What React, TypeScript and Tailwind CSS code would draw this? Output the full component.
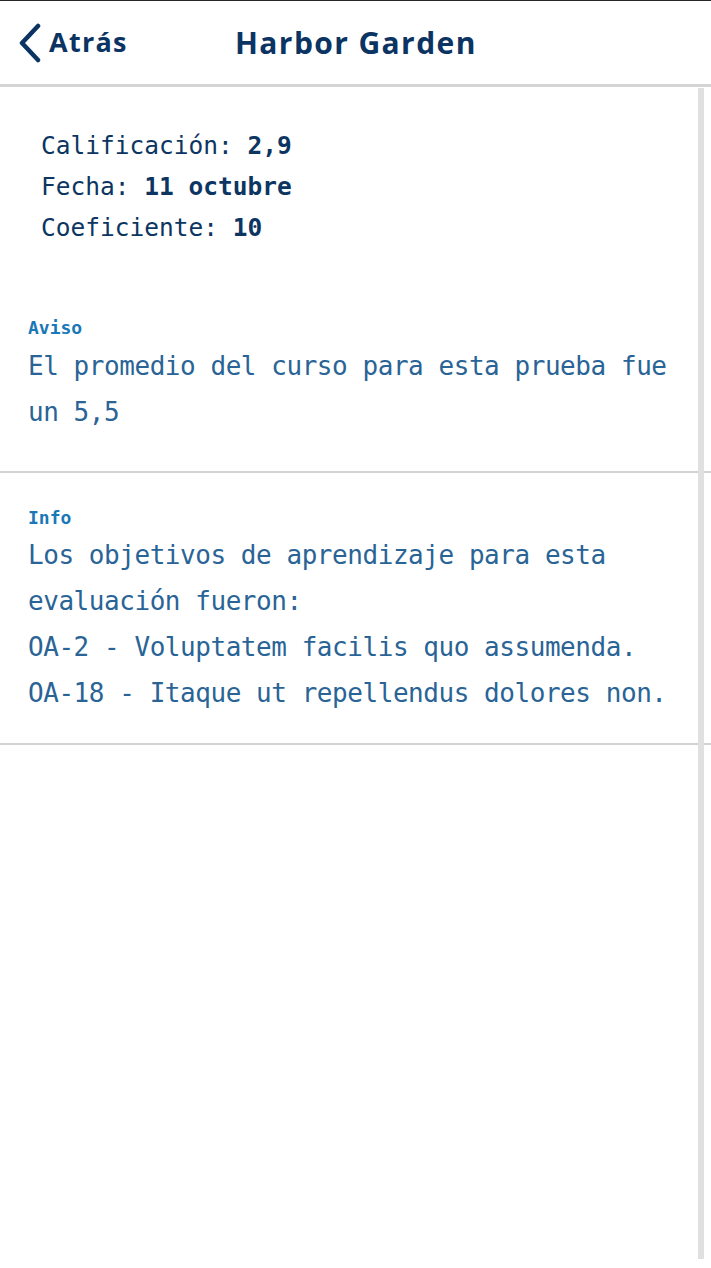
import React from "react";

const mono = { fontFamily: '"DejaVu Sans Mono", "Liberation Mono", monospace' };

export default function App() {
  return (
    <div className="relative w-[711px] h-[1268px] bg-white overflow-hidden border-t border-[#262626]">
      {/* Header */}
      <div className="relative h-[86px] flex items-center border-b-[3px] border-[#d5d5d5]">
        <div className="flex items-center pl-[17px] text-[#0b3463]">
          <svg width="26" height="40" viewBox="0 0 26 40" className="mr-[6px]">
            <path d="M21 3 L5 20 L21 37" fill="none" stroke="#0b3463" strokeWidth="4.5" strokeLinecap="round" strokeLinejoin="round" />
          </svg>
          <span className="text-[27px] font-bold tracking-[1.3px]" style={{ fontFamily: '"Open Sans", sans-serif' }}>Atrás</span>
        </div>
        <div className="absolute left-[235px] top-0 h-full flex items-center">
          <span className="text-[30px] font-bold text-[#0b3463] tracking-[1.4px]" style={{ fontFamily: '"Open Sans", sans-serif' }}>Harbor Garden</span>
        </div>
      </div>

      {/* Content */}
      <div className="pr-[13px]">
        <div className="pl-[41px] pt-[38px] text-[24.5px] leading-[41px] text-[#0d3561]" style={mono}>
          <div>Calificación: <span className="font-bold">2,9</span></div>
          <div>Fecha: <span className="font-bold">11 octubre</span></div>
          <div>Coeficiente: <span className="font-bold">10</span></div>
        </div>

        <div className="pl-[28px] pt-[67px] pb-[36px]" style={mono}>
          <div className="text-[18px] leading-[26px] font-bold text-[#1a78b8]">Aviso</div>
          <div className="mt-[2px] text-[26px] leading-[46px] text-[#2a6496] tracking-[-0.45px]">El promedio del curso para esta prueba fue un 5,5</div>
        </div>
      </div>
      <div className="h-[2px] bg-[#d3d3d3]" />
      <div className="pr-[13px]">
        <div className="pl-[28px] pt-[32px] pb-[27px]" style={mono}>
          <div className="text-[18px] leading-[26px] font-bold text-[#1a78b8]">Info</div>
          <div className="mt-[1px] text-[26px] leading-[46px] text-[#2a6496] tracking-[-0.45px]">
            <div>Los objetivos de aprendizaje para esta evaluación fueron:</div>
            <div>OA-2 - Voluptatem facilis quo assumenda.</div>
            <div>OA-18 - Itaque ut repellendus dolores non.</div>
          </div>
        </div>
      </div>
      <div className="h-[2px] bg-[#d3d3d3]" />

      {/* Scrollbar */}
      <div className="absolute left-[698px] top-[87px] w-[6px] h-[1171px] bg-[#e0e0e0]" />
    </div>
  );
}
